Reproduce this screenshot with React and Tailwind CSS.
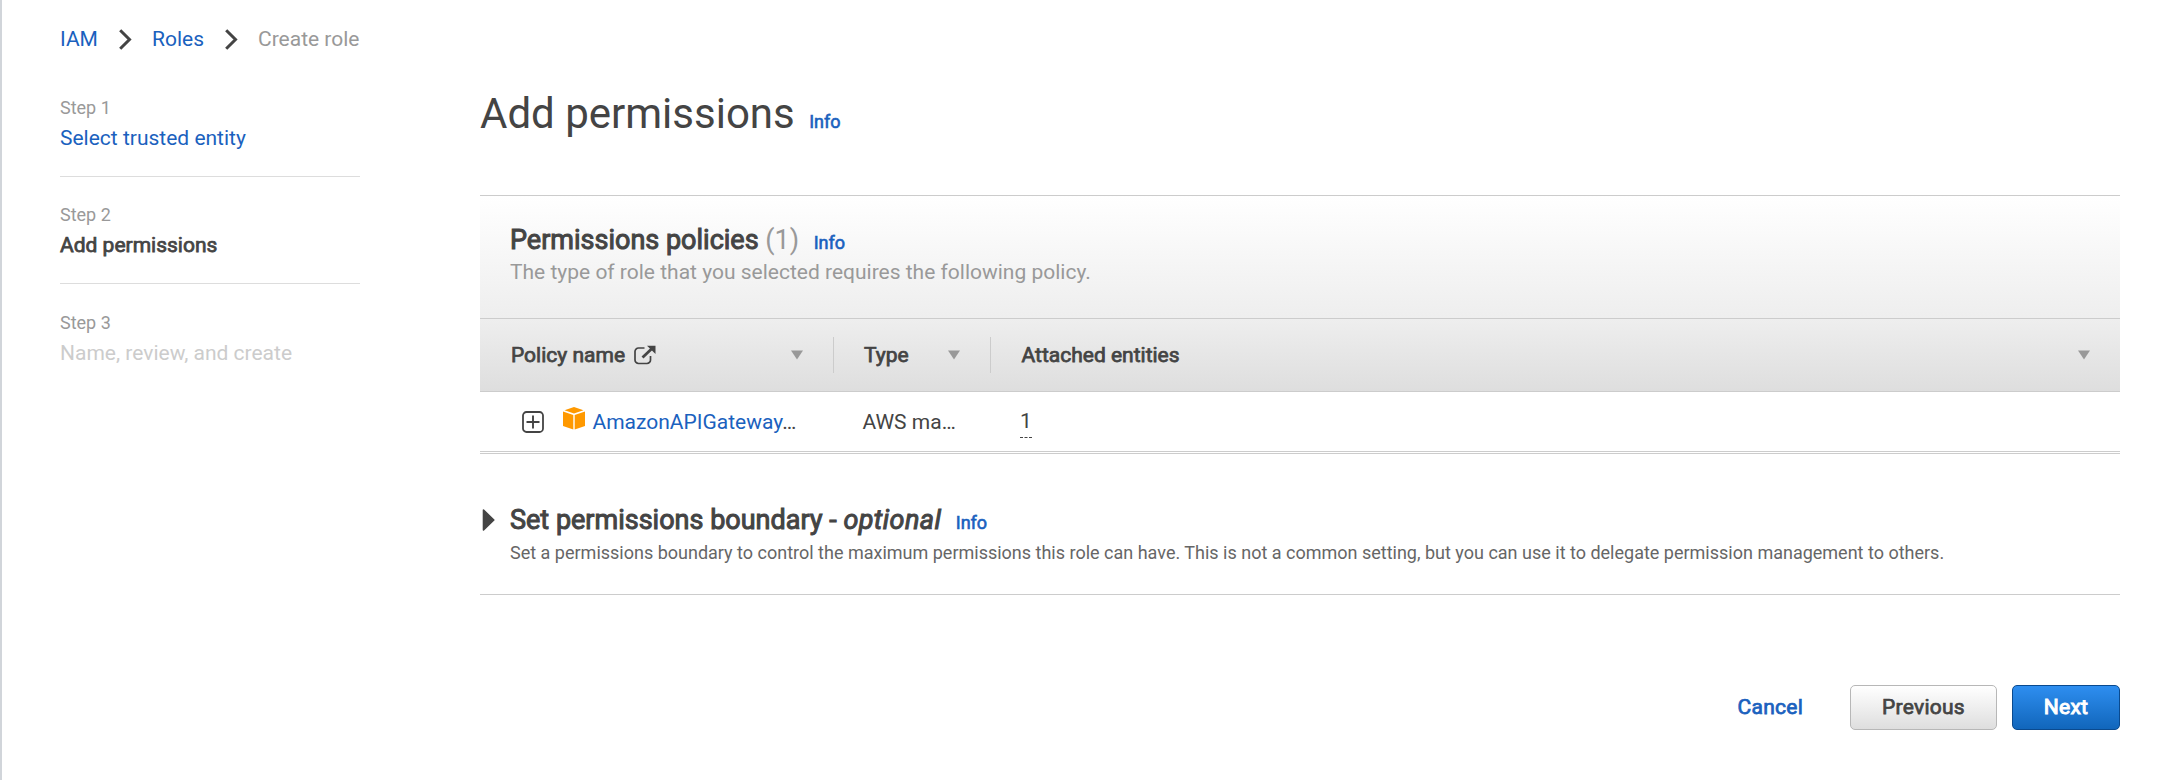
const BOLD = "[-webkit-text-stroke:0.75px_currentColor]";

function Chevron() {
  return (
    <svg width="13" height="21" viewBox="0 0 13 21" fill="none" stroke="#444" strokeWidth="3">
      <path d="M1.2 1.2 10.5 10.5 1.2 19.8" />
    </svg>
  );
}

function ExternalIcon() {
  return (
    <svg width="22" height="20" viewBox="0 0 22 20" fill="none" stroke="#444">
      <path d="M10.5 3H4.5A3.5 3.5 0 0 0 1 6.5V15A3.5 3.5 0 0 0 4.5 18.5H13A3.5 3.5 0 0 0 16.5 15V11" strokeWidth="1.7" />
      <path d="M8.5 12.5 18 3.5" strokeWidth="2.8" />
      <path d="M13 .8H21.5V9Z" fill="#444" stroke="none" />
    </svg>
  );
}

function SortArrow() {
  return (
    <svg width="12" height="10" viewBox="0 0 12 10" className="shrink-0">
      <path d="M0 .5H12L6 9.5Z" fill="#999" />
    </svg>
  );
}

function ExpandIcon() {
  return (
    <svg width="22" height="22" viewBox="0 0 22 22" fill="none" stroke="#444">
      <rect x="1" y="1" width="20" height="20" rx="3.5" strokeWidth="1.8" />
      <path d="M4.5 11H17.5M11 4.5V17.5" strokeWidth="1.9" />
    </svg>
  );
}

function CubeIcon() {
  return (
    <svg width="22" height="23" viewBox="0 0 22 23" fill="#ff9900">
      <path d="M11 0 20.5 3.3 11 6.6 1.5 3.3Z" />
      <path d="M0 4.4 10.3 8V22.5L0 19Z" />
      <path d="M22 4.4 11.7 8V22.5L22 19Z" />
    </svg>
  );
}

function Info() {
  return (
    <a className="ml-[14.5px] text-[18px] leading-[25px] text-[#1a61be] [-webkit-text-stroke:0.6px_currentColor]">Info</a>
  );
}

function Step({ n, children, tone }) {
  return (
    <li className="border-b border-[#ddd] pt-[25px] pb-[23px] first:pt-0 last:border-0 last:pt-[26px]">
      <div className="text-[18px] leading-[25px] text-[#999]">Step {n}</div>
      <div className={`mt-[3px] text-[21px] leading-[30px] ${tone}`}>{children}</div>
    </li>
  );
}

function HeadCell({ children, className }) {
  return (
    <div className={`flex h-[36px] items-center justify-between pr-[30px] ${className}`}>
      <span className={`flex items-center gap-[9px] text-[21px] leading-[30px] ${BOLD}`}>{children}</span>
      <SortArrow />
    </div>
  );
}

export default function App() {
  return (
    <div className="flex h-[780px] w-[2176px] flex-col border-l-2 border-[#d1d5da] bg-white pr-[56px] pl-[58px] font-[Roboto,sans-serif] text-[#444]">
      <nav className="mt-[24px] flex items-center text-[21px] leading-[30px]">
        <a className="w-[59px] text-[#1a61be]">IAM</a>
        <Chevron />
        <a className="ml-[20px] w-[73px] text-[#1a61be]">Roles</a>
        <Chevron />
        <span className="ml-[20px] text-[#999]">Create role</span>
      </nav>

      <div className="flex">
        <ol className="mt-[41px] w-[300px] shrink-0">
          <Step n={1} tone="text-[#1a61be]">Select trusted entity</Step>
          <Step n={2} tone={BOLD}>Add permissions</Step>
          <Step n={3} tone="text-[#ccc]">Name, review, and create</Step>
        </ol>

        <main className="mt-[31px] ml-[120px] w-[1640px]">
          <div className="flex h-[57px] items-baseline">
            <h1 className="text-[42px] leading-[57px]">Add permissions</h1>
            <Info />
          </div>

          <section className="mt-[53px] border-t border-[#ccc]">
            <header className="h-[122px] bg-linear-to-b/srgb from-white to-[#eee] pt-[27px] pl-[30px]">
              <div className="flex h-[34px] items-baseline">
                <h2 className="text-[27px] leading-[34px]">
                  <span className="[-webkit-text-stroke:1px_currentColor]">Permissions policies</span>{" "}
                  <span className="text-[#999]">(1)</span>
                </h2>
                <Info />
              </div>
              <p className="text-[21px] leading-[30px] text-[#999]">
                The type of role that you selected requires the following policy.
              </p>
            </header>

            <div className="flex h-[74px] items-center border-y border-[#ccc] bg-linear-to-b/srgb from-[#eee] to-[#dedede]">
              <HeadCell className="w-[354px] border-r border-[#ccc] pl-[31px]">Policy name <ExternalIcon /></HeadCell>
              <HeadCell className="w-[157px] border-r border-[#ccc] pl-[30px]">Type</HeadCell>
              <HeadCell className="flex-1 pl-[30.5px]">Attached entities</HeadCell>
            </div>

            <div className="flex h-[59px] text-[21px] leading-[30px]">
              <div className="flex w-[382.5px] pt-[15px] pl-[42px]">
                <span className="mt-[4px]"><ExpandIcon /></span>
                <span className="ml-[19px]"><CubeIcon /></span>
                <span className="ml-[7.5px]"><a className="text-[#1a61be]">AmazonAPIGateway</a>…</span>
              </div>
              <div className="w-[157.5px] pt-[15px]">AWS ma…</div>
              <div className="pt-[14px]">
                <span className="block h-[32px] border-b border-dashed border-[#444]">1</span>
              </div>
            </div>
            <div className="h-[3px] border-y border-[#ccc]" />
          </section>

          <section className="mt-[49px] flex border-b border-[#ccc] pb-[29px]">
            <svg width="30" height="22" viewBox="0 0 30 22" className="mt-[6px] shrink-0">
              <path d="M3.5 1 13.8 11 3.5 21Z" fill="#444" stroke="#444" strokeWidth="1.6" strokeLinejoin="round" />
            </svg>
            <div>
              <div className="flex h-[34px] items-baseline">
                <h2 className="text-[27px] leading-[34px] [-webkit-text-stroke:1px_currentColor]">
                  Set permissions boundary - <i className="tracking-[0.4px]">optional</i>
                </h2>
                <Info />
              </div>
              <p className="mt-[3px] text-[18px] leading-[25px] text-[#666]">
                Set a permissions boundary to control the maximum permissions this role can have. This is not a common setting, but you can use it to delegate permission management to others.
              </p>
            </div>
          </section>

          <div className={`mt-[90px] flex justify-end text-[21px] leading-[30px] tracking-[0.25px] ${BOLD}`}>
            <button className="mr-[47px] h-[45px] pb-[1px] text-[#1a61be]">Cancel</button>
            <button className="mr-[15px] h-[45px] w-[147px] rounded-[5px] border border-[#b7b7b7] bg-linear-to-b/srgb from-white to-[#dedede] pb-[1px]">
              Previous
            </button>
            <button className="h-[45px] w-[108px] rounded-[5px] border border-[#0a4a8f] bg-linear-to-b/srgb from-[#2e8ef0] to-[#1166bb] pb-[1px] text-white [-webkit-text-stroke:1px_currentColor]">
              Next
            </button>
          </div>
        </main>
      </div>
    </div>
  );
}
